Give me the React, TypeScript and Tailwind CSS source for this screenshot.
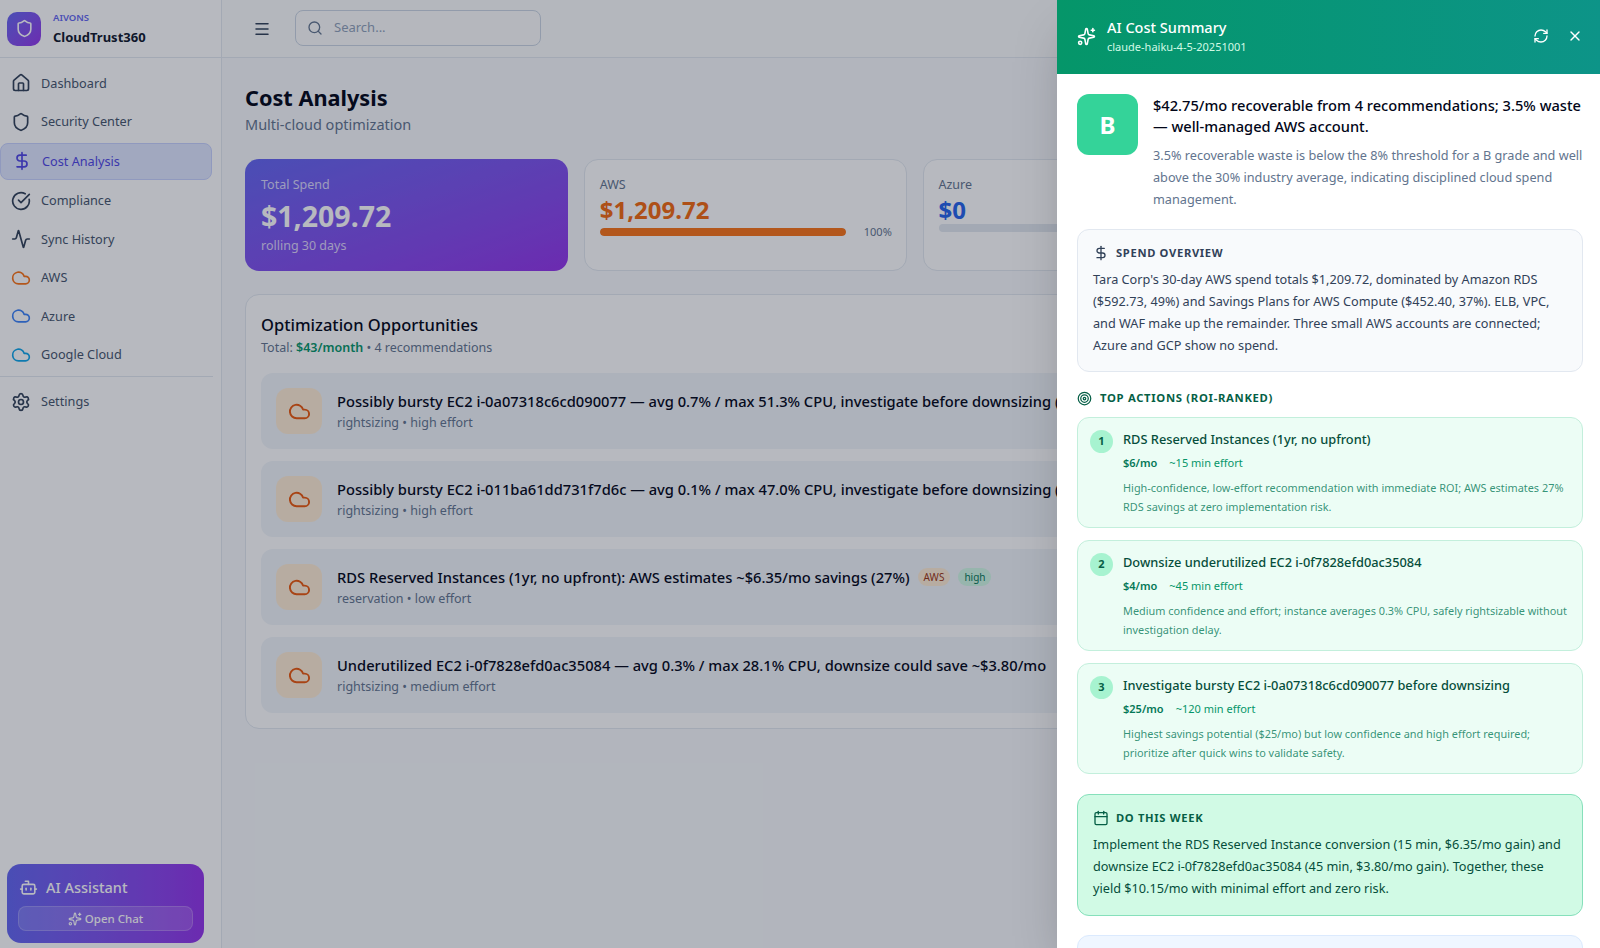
import { Activity, Bot, Calendar, CircleCheckBig, Cloud, DollarSign, House, Menu, RefreshCw, Search, Settings, Shield, Sparkles, Target, X } from 'lucide-react'

const navTop = [
    { label: 'Dashboard', icon: House, cls: 'text-slate-700' },
    { label: 'Security Center', icon: Shield, cls: 'text-slate-700' },
    { label: 'Cost Analysis', icon: DollarSign, cls: 'text-[#4f46e5]', active: true },
    { label: 'Compliance', icon: CircleCheckBig, cls: 'text-slate-700' },
    { label: 'Sync History', icon: Activity, cls: 'text-slate-700' },
    { label: 'AWS', icon: Cloud, cls: 'text-[#f97316]' },
    { label: 'Azure', icon: Cloud, cls: 'text-[#3b82f6]' },
    { label: 'Google Cloud', icon: Cloud, cls: 'text-[#0ea5e9]' },
]

const recommendations = [
    { title: 'Possibly bursty EC2 i-0a07318c6cd090077 — avg 0.7% / max 51.3% CPU, investigate before downsizing (~$25/mo)', sub: 'rightsizing • high effort' },
    { title: 'Possibly bursty EC2 i-011ba61dd731f7d6c — avg 0.1% / max 47.0% CPU, investigate before downsizing (~$8/mo)', sub: 'rightsizing • high effort' },
    { title: 'RDS Reserved Instances (1yr, no upfront): AWS estimates ~$6.35/mo savings (27%)', sub: 'reservation • low effort', badges: true },
    { title: 'Underutilized EC2 i-0f7828efd0ac35084 — avg 0.3% / max 28.1% CPU, downsize could save ~$3.80/mo', sub: 'rightsizing • medium effort' },
]

const actions = [
    {
        title: 'RDS Reserved Instances (1yr, no upfront)',
        gain: '$6/mo',
        effort: '~15 min effort',
        desc: 'High-confidence, low-effort recommendation with immediate ROI; AWS estimates 27% RDS savings at zero implementation risk.',
    },
    {
        title: 'Downsize underutilized EC2 i-0f7828efd0ac35084',
        gain: '$4/mo',
        effort: '~45 min effort',
        desc: 'Medium confidence and effort; instance averages 0.3% CPU, safely rightsizable without investigation delay.',
    },
    {
        title: 'Investigate bursty EC2 i-0a07318c6cd090077 before downsizing',
        gain: '$25/mo',
        effort: '~120 min effort',
        desc: 'Highest savings potential ($25/mo) but low confidence and high effort required; prioritize after quick wins to validate safety.',
    },
]

function Sidebar() {
    return (
        <aside className="w-[222px] shrink-0 h-full bg-white border-r border-slate-200 flex flex-col">
            <div className="h-[58px] shrink-0 border-b border-slate-200 flex items-center pl-[7px] gap-[12px]">
                <div className="w-[34px] h-[34px] rounded-[10px] bg-gradient-to-br from-[#6366f1] to-[#9333ea] flex items-center justify-center">
                    <Shield className="w-[19px] h-[19px] text-white" strokeWidth={2} />
                </div>
                <div>
                    <div className="text-[9.5px] leading-[13px] font-semibold text-[#6366f1]">AIVONS</div>
                    <div className="text-[13px] leading-[20px] mt-[3px] font-bold text-slate-900">CloudTrust360</div>
                </div>
            </div>
            <nav className="pt-[6px] pr-[9px]">
                {navTop.map((item) =>
                    item.active ? (
                        <div key={item.label} className="h-[37px] mt-[2px] mb-[2px] rounded-lg bg-[#e0e7ff] border border-[#c7d2fe] flex items-center pl-[11px] gap-[10px] text-[#4f46e5]">
                            <item.icon className="w-[20px] h-[20px]" />
                            <span className="text-[12.7px]">{item.label}</span>
                        </div>
                    ) : (
                        <div key={item.label} className="h-[38.4px] flex items-center pl-[11px] gap-[10px]">
                            <item.icon className={`w-[20px] h-[20px] ${item.cls}`} />
                            <span className="text-[12.7px] text-slate-600">{item.label}</span>
                        </div>
                    ),
                )}
            </nav>
            <div className="border-t border-slate-200 mt-[2px] mr-[8px]" />
            <div className="h-[38px] mt-[6px] flex items-center pl-[11px] gap-[10px]">
                <Settings className="w-[20px] h-[20px] text-slate-700" />
                <span className="text-[12.7px] text-slate-600">Settings</span>
            </div>
            <div className="mt-auto mb-[5px] ml-[7px] mr-[17px] h-[79px] rounded-[14px] bg-gradient-to-r from-[#6366f1] to-[#9333ea] px-[11px] pt-[11px] text-white">
                <div className="flex items-center gap-[8px] pl-[1px]">
                    <Bot className="w-[19px] h-[19px]" />
                    <span className="text-[14.5px] font-medium leading-[24px]">AI Assistant</span>
                </div>
                <div className="mt-[7px] h-[25px] rounded-lg bg-white/15 border border-white/20 flex items-center justify-center gap-[3px]">
                    <Sparkles className="w-[14px] h-[14px]" />
                    <span className="text-[11.5px] font-medium">Open Chat</span>
                </div>
            </div>
        </aside>
    )
}

function StatCard({ label, value, valueCls, barCls, width, pct }: { label: string; value: string; valueCls: string; barCls: string; width: string; pct: string }) {
    return (
        <div className="h-[112px] rounded-[14px] bg-white border border-slate-200 px-[15px] pt-[16px] overflow-hidden">
            <div className="text-[12.5px] leading-[18px] text-slate-500">{label}</div>
            <div className={`text-[24px] leading-[30px] mt-[1px] font-bold ${valueCls}`}>{value}</div>
            <div className="flex items-center -mt-[1px]">
                <div className="w-[246px] h-[8px] rounded-full bg-slate-200 overflow-hidden shrink-0">
                    <div className={`h-full rounded-full ${barCls}`} style={{ width }} />
                </div>
                <span className="ml-[18px] text-[11px] text-slate-500">{pct}</span>
            </div>
        </div>
    )
}

function MainContent() {
    return (
        <div className="flex-1 min-w-0 h-full flex flex-col bg-slate-50">
            <header className="h-[58px] shrink-0 border-b border-slate-200 bg-white/40 flex items-center pl-[31px]">
                <Menu className="w-[18px] h-[18px] text-slate-700" />
                <div className="ml-[24px] -mt-[2px] w-[246px] h-[36px] rounded-lg border border-slate-300 bg-white/30 flex items-center pl-[11px] gap-[11px]">
                    <Search className="w-[16px] h-[16px] text-slate-500" />
                    <span className="text-[13px] text-slate-400">Search...</span>
                </div>
            </header>
            <main className="pl-[23px] pr-[16px] pt-[25px]">
                <h1 className="text-[21.7px] leading-[30px] font-bold text-slate-950">Cost Analysis</h1>
                <p className="text-[14.5px] leading-[22px] text-slate-500">Multi-cloud optimization</p>
                <div className="grid grid-cols-4 gap-4 mt-[24px]">
                    <div className="h-[112px] rounded-[14px] bg-gradient-to-br from-[#6366f1] to-[#9333ea] pl-[16px] pt-[17px] text-white">
                        <div className="text-[12.5px] leading-[18px] text-white/75">Total Spend</div>
                        <div className="text-[28.5px] leading-[38px] mt-[3px] font-bold">$1,209.72</div>
                        <div className="text-[12.5px] leading-[18px] mt-[2px] text-white/75">rolling 30 days</div>
                    </div>
                    <StatCard label="AWS" value="$1,209.72" valueCls="text-[#f2690f]" barCls="bg-[#f97316]" width="100%" pct="100%" />
                    <StatCard label="Azure" value="$0" valueCls="text-[#2563eb]" barCls="bg-[#2563eb]" width="0%" pct="" />
                    <div className="h-[112px] rounded-[14px] bg-white border border-slate-200" />
                </div>
                <section className="mt-[23px] h-[435px] rounded-[14px] bg-white border border-slate-200 pl-[15px] pt-[17px] overflow-hidden">
                    <h2 className="text-[16.5px] leading-[26px] font-medium text-slate-950">Optimization Opportunities</h2>
                    <p className="text-[12.5px] leading-[18px] mt-[1px] text-slate-500">
                        Total: <span className="font-semibold text-[#059669]">$43/month</span> • 4 recommendations
                    </p>
                    <div className="mt-[16px] flex flex-col gap-[12px] pr-[15px]">
                        {recommendations.map((r) => (
                            <div key={r.title} className="h-[76px] rounded-xl bg-slate-100 flex items-center pl-[15px] gap-[15px]">
                                <div className="w-[46px] h-[46px] rounded-xl bg-[#ffedd5] flex items-center justify-center shrink-0">
                                    <Cloud className="w-[23px] h-[23px] text-[#ea580c]" />
                                </div>
                                <div className="min-w-0">
                                    <div className="flex items-center gap-[8px] whitespace-nowrap">
                                        <span className="text-[14.7px] leading-[22px] font-medium text-slate-950">{r.title}</span>
                                        {r.badges && (
                                            <>
                                                <span className="px-[6px] h-[18px] flex items-center rounded-full bg-[#ffedd5] text-[10px] text-[#9a3412]">AWS</span>
                                                <span className="px-[6px] h-[18px] flex items-center rounded-full bg-[#d1fae5] text-[10px] text-[#047857]">high</span>
                                            </>
                                        )}
                                    </div>
                                    <div className="text-[12.5px] leading-[18px] mt-[2px] text-slate-500">{r.sub}</div>
                                </div>
                            </div>
                        ))}
                    </div>
                </section>
            </main>
        </div>
    )
}

function SectionHead({ icon: Icon, label, cls }: { icon: typeof Target; label: string; cls: string }) {
    return (
        <div className={`flex items-center gap-[7px] ${cls}`}>
            <Icon className="w-[16px] h-[16px]" />
            <span className="text-[11.2px] leading-[16px] font-bold tracking-[0.06em]">{label}</span>
        </div>
    )
}

function SummaryPanel() {
    return (
        <div className="absolute top-0 right-0 bottom-0 w-[543px] bg-white shadow-2xl flex flex-col overflow-hidden">
            <div className="h-[74px] shrink-0 bg-gradient-to-r from-[#059669] to-[#0d9488] flex items-center pl-[20px] pr-[17px] pb-[2px] text-white">
                <Sparkles className="w-[19px] h-[19px]" />
                <div className="ml-[11px]">
                    <div className="text-[14.5px] leading-[20px] font-medium">AI Cost Summary</div>
                    <div className="text-[11px] leading-[16px] mt-[2px] text-[#d1fae5]">claude-haiku-4-5-20251001</div>
                </div>
                <RefreshCw className="ml-auto w-[16px] h-[16px]" />
                <X className="ml-[18px] w-[16px] h-[16px]" />
            </div>
            <div className="pl-[20px] pr-[17px] pt-[20px]">
                <div className="flex gap-[15px]">
                    <div className="w-[61px] h-[61px] shrink-0 rounded-xl bg-[#34d399] flex items-center justify-center text-white text-[24px] font-bold">B</div>
                    <div className="pt-[1px]">
                        <div className="text-[14.65px] leading-[21px] font-medium text-slate-950">$42.75/mo recoverable from 4 recommendations; 3.5% waste — well-managed AWS account.</div>
                        <div className="text-[12.7px] leading-[22px] mt-[7px] text-slate-500">3.5% recoverable waste is below the 8% threshold for a B grade and well above the 30% industry average, indicating disciplined cloud spend management.</div>
                    </div>
                </div>
                <div className="mt-[19px] h-[143px] rounded-xl bg-slate-50 border border-slate-200 px-[15px] pt-[15px]">
                    <SectionHead icon={DollarSign} label="SPEND OVERVIEW" cls="text-slate-700" />
                    <p className="text-[12.7px] leading-[22px] mt-[7px] text-slate-700">Tara Corp's 30-day AWS spend totals $1,209.72, dominated by Amazon RDS ($592.73, 49%) and Savings Plans for AWS Compute ($452.40, 37%). ELB, VPC, and WAF make up the remainder. Three small AWS accounts are connected; Azure and GCP show no spend.</p>
                </div>
                <div className="mt-[18px]">
                    <div className="flex items-center gap-[8px] text-[#065f46]">
                        <Target className="w-[15px] h-[15px]" />
                        <span className="text-[11.3px] leading-[16px] font-bold tracking-[0.06em]">TOP ACTIONS (ROI-RANKED)</span>
                    </div>
                    <div className="mt-[11px] flex flex-col gap-[12px]">
                        {actions.map((a, i) => (
                            <div key={a.title} className="h-[111px] rounded-xl bg-[#ecfdf5] border border-[#c3efdc] pl-[12px] pr-[10px] pt-[11px] flex gap-[10px]">
                                <div className="w-[23px] h-[23px] mt-[1px] shrink-0 rounded-full bg-[#a7f3d0] flex items-center justify-center text-[11px] font-bold text-[#065f46]">{i + 1}</div>
                                <div className="min-w-0">
                                    <div className="text-[12.8px] leading-[20px] font-medium text-[#064e3b]">{a.title}</div>
                                    <div className="flex gap-[12px] mt-[5px] text-[11px] leading-[18px]">
                                        <span className="font-semibold text-[#047857]">{a.gain}</span>
                                        <span className="text-[#059669]">{a.effort}</span>
                                    </div>
                                    <p className="text-[10.9px] leading-[19px] mt-[6px] text-[#047857]/80">{a.desc}</p>
                                </div>
                            </div>
                        ))}
                    </div>
                </div>
                <div className="mt-[20px] h-[122px] rounded-xl bg-[#d1fae5] border border-[#86e0bb] px-[15px] pt-[15px]">
                    <SectionHead icon={Calendar} label="DO THIS WEEK" cls="text-[#065f46]" />
                    <p className="text-[12.7px] leading-[22px] mt-[7px] text-[#064e3b]">Implement the RDS Reserved Instance conversion (15 min, $6.35/mo gain) and downsize EC2 i-0f7828efd0ac35084 (45 min, $3.80/mo gain). Together, these yield $10.15/mo with minimal effort and zero risk.</p>
                </div>
                <div className="mt-[19px] h-[60px] rounded-xl bg-[#eff6ff] border border-[#dbeafe]" />
            </div>
        </div>
    )
}

export default function App() {
    return (
        <div className="relative w-full h-[948px] flex overflow-hidden font-['Noto_Sans',sans-serif]">
            <Sidebar />
            <MainContent />
            <div className="absolute inset-0 bg-slate-900/30" />
            <SummaryPanel />
        </div>
    )
}
